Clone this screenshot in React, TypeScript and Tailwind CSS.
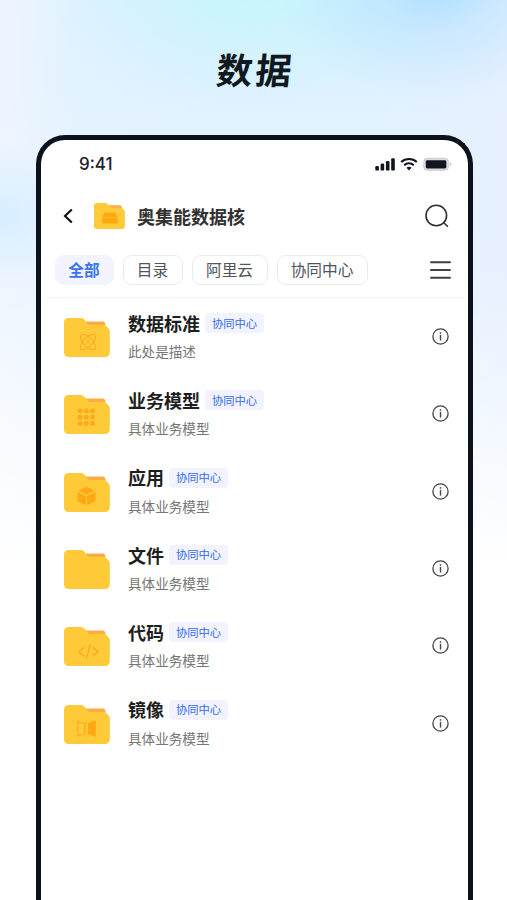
import type { ReactNode } from 'react'

type GlyphName = 'atom' | 'grid' | 'cube' | 'none' | 'code' | 'mirror' | 'drive'

const tabs = [
  { label: '全部', width: 'w-[59px]', active: true },
  { label: '目录', width: 'w-[60px]', active: false },
  { label: '阿里云', width: 'w-[76px]', active: false },
  { label: '协同中心', width: 'w-[91px]', active: false }
]

const folders: { id: number; title: string; desc: string; glyph: GlyphName }[] = [
  { id: 1, title: '数据标准', desc: '此处是描述', glyph: 'atom' },
  { id: 2, title: '业务模型', desc: '具体业务模型', glyph: 'grid' },
  { id: 3, title: '应用', desc: '具体业务模型', glyph: 'cube' },
  { id: 4, title: '文件', desc: '具体业务模型', glyph: 'none' },
  { id: 5, title: '代码', desc: '具体业务模型', glyph: 'code' },
  { id: 6, title: '镜像', desc: '具体业务模型', glyph: 'mirror' }
]

const glyphs: Record<GlyphName, ReactNode> = {
  none: null,
  atom: (
    <g fill="none" stroke="#f9a825" strokeWidth="1">
      <ellipse cx="24" cy="24" rx="9.8" ry="4.6" transform="rotate(45 24 24)" />
      <ellipse cx="24" cy="24" rx="9.8" ry="4.6" transform="rotate(-45 24 24)" />
      <circle cx="24" cy="24" r="1" />
    </g>
  ),
  grid: (
    <g fill="#fbab20">
      {[13.8, 20.1, 26.4].map((x) =>
        [13.6, 19.9, 26.2].map((y) => <rect key={`${x}-${y}`} x={x} y={y} width="4.4" height="4.5" rx="0.6" />)
      )}
      <path d="M13.8 15.3h17v1.2h-17zM13.8 21.5h17v1.2h-17zM13.8 27.8h17v1.2h-17z" opacity="0.5" />
    </g>
  ),
  cube: (
    <g fill="#ffa814">
      <path d="M22.5 13.7l8.3 3.9-8.3 3.9-8.3-3.9z" />
      <path d="M13.5 19l8.4 3.9v9.3l-7.2-3.5a2 2 0 0 1-1.2-1.8z" />
      <path d="M31.5 19l-8.4 3.9v9.3l7.2-3.5a2 2 0 0 0 1.2-1.8z" />
    </g>
  ),
  code: (
    <path
      d="M20 20.3l-5.2 4.5 5.2 4.4M28.8 20.3l5.2 4.5-5.2 4.4M26.3 17.5l-4 14.8"
      fill="none"
      stroke="#f9a623"
      strokeWidth="1.2"
    />
  ),
  mirror: (
    <g>
      <path d="M14 16.4l6.6 2.3v10L14 31z" fill="none" stroke="#fcae22" strokeWidth="1.2" />
      <path d="M31.7 15.3v16.5l-7.7-2.6V18z" fill="#ffa814" />
      <path d="M22.3 15v17.5" stroke="#fdba2f" strokeWidth="0.7" />
    </g>
  ),
  drive: (
    <g fill="#ffa70f">
      <path d="M17 14.4h13a3 3 0 0 1 2.6 1.8l2.2 5.3H12.6l1.8-5.3a3 3 0 0 1 2.6-1.8z" />
      <path d="M12.5 22h22.500l.6 7a1.600 1.600 0 0 1-1.600 1.800H13.600a1.600 1.600 0 0 1-1.600-1.600z" />
    </g>
  )
}

function FolderIcon({ glyph, className }: { glyph: GlyphName; className: string }) {
  return (
    <svg viewBox="0 0 46 39" preserveAspectRatio="none" className={className}>
      <path d="M20 3.5h18.5a2.8 2.8 0 0 1 2.8 2.8V12H20z" fill="#fcab45" />
      <path
        d="M4.500 0h12.200a5 5 0 0 1 3.200 1.200l4 4.600c.8.900 1.500 1.300 2.700 1.300h12.800c1.200 0 2.200.4 3.100 1.200l1.900 1.900c.9.900 1.400 1.800 1.400 3.100V34.500a4.500 4.500 0 0 1-4.500 4.500H4.500A4.500 4.500 0 0 1 0 34.500v-30A4.500 4.500 0 0 1 4.500 0z"
        fill="#ffca38"
      />
      {glyphs[glyph]}
    </svg>
  )
}

function StatusBar() {
  return (
    <div className="flex h-[49px] items-center justify-between pl-[38px] pr-[16px]">
      <span className="font-['Inter'] text-[17px] font-medium leading-none text-[#1b2029]">9:41</span>
      <svg width="77" height="15" viewBox="0 0 77 15">
        <g fill="#10151f">
          <rect x="0.3" y="9" width="3.6" height="4.6" rx="1.2" />
          <rect x="5.6" y="6.6" width="3.6" height="7" rx="1.2" />
          <rect x="10.9" y="4" width="3.6" height="9.6" rx="1.2" />
          <rect x="16.2" y="1.2" width="3.6" height="12.4" rx="1.2" />
          <path d="M34 9.8a3.8 3.8 0 0 1 2.5 1L34 13.5 31.5 10.8a3.8 3.8 0 0 1 2.5-1z" />
        </g>
        <g fill="none" stroke="#10151f" strokeWidth="2">
          <path d="M26.2 5a11.5 11.5 0 0 1 15.6 0" />
          <path d="M29.2 8.2a7.1 7.1 0 0 1 9.6 0" />
        </g>
        <rect x="48.8" y="1.3" width="24.5" height="12" rx="3.2" fill="#dcddde" stroke="#cbcdce" strokeWidth="1" />
        <rect x="50.8" y="3.2" width="20.5" height="8.2" rx="1.4" fill="#10151f" />
        <path d="M74.6 5.2c1.3.3 2 1 2 2.1s-.7 1.8-2 2.1z" fill="#cbcdce" />
      </svg>
    </div>
  )
}

function Header() {
  return (
    <div className="flex h-[54px] items-center pl-[22px] pr-[19px]">
      <svg width="10" height="16" viewBox="0 0 10 16" fill="none" stroke="#151515" strokeWidth="2.2">
        <path d="M8.8 1.500L2 8l6.800 6.500" />
      </svg>
      <FolderIcon glyph="drive" className="ml-[21px] h-[26px] w-[31px]" />
      <span className="mb-px ml-[12px] text-[18px] font-bold leading-none text-[#303030]">奥集能数据核</span>
      <svg className="ml-auto" width="24" height="24" viewBox="0 0 24 24" fill="none" stroke="#303030" strokeWidth="1.6">
        <circle cx="11.3" cy="11.5" r="10.3" />
        <path d="M18.3 18.300l4.600 4.500" />
      </svg>
    </div>
  )
}

function TabBar() {
  return (
    <div className="mx-[4px] flex h-[55px] items-center gap-[9px] border-b border-[#f3f3f4] pl-[9.5px] pr-[13px]">
      {tabs.map((tab) => (
        <button
          key={tab.label}
          className={`flex h-[30px] shrink-0 items-center justify-center rounded-[9px] border text-[15.7px] leading-none ${tab.width} ${
            tab.active
              ? 'border-[#f2f3ff] bg-[#f2f3ff] font-bold text-[#3a74ec]'
              : 'border-[#e9ebed] bg-white text-[#50545b]'
          }`}
        >
          {tab.label}
        </button>
      ))}
      <svg className="ml-auto" width="21" height="18" viewBox="0 0 21 18" stroke="#414141" strokeWidth="1.9" strokeLinecap="round">
        <path d="M1 1.3h19M1 9h19M1 16.7h19" />
      </svg>
    </div>
  )
}

function InfoIcon() {
  return (
    <svg width="17" height="17" viewBox="0 0 17 17" fill="none" stroke="#454545" strokeWidth="1.3">
      <circle cx="8.5" cy="8.5" r="7.6" />
      <path d="M8.5 6.8v5.8" strokeWidth="1.4" />
      <path d="M8.5 4.2v1.5" strokeWidth="1.5" />
    </svg>
  )
}

export default function App() {
  return (
    <div className="flex h-[900px] w-[507px] flex-col items-center overflow-hidden bg-white bg-[linear-gradient(180deg,#ffffff00_0px,#ffffff00_260px,#ffffff_570px),radial-gradient(ellipse_160px_120px_at_435px_-20px,#a9ddff_0%,#b9e2ff99_40%,#c9e7ff00_100%),radial-gradient(ellipse_210px_120px_at_255px_-15px,#c5f7fc_0%,#c8f4fd99_45%,#d0efff00_100%),radial-gradient(ellipse_80px_70px_at_0px_215px,#d6eeff_0%,#dcf0ff00_100%),linear-gradient(90deg,#eef5ff_0%,#e6f3ff80_14%,#def0ff00_40%,#def0ff00_75%,#e6f0ff_100%),linear-gradient(180deg,#daf1ff_0px,#def1ff_80px,#e4f2ff_140px,#eaf4ff_400px)] font-['Noto_Sans_CJK_SC',sans-serif]">
      <h1 className="flex h-[135px] shrink-0 -skew-x-6 items-center pl-[6px] text-[36px] font-bold leading-none tracking-[3px] text-[#101820]">
        数据
      </h1>
      <div className="mr-[-2px] h-[800px] w-[437px] shrink-0 overflow-hidden rounded-t-[29px] border-[5px] border-b-0 border-[#0c121c] bg-white">
        <StatusBar />
        <Header />
        <TabBar />
        <ul>
          {folders.map((folder) => (
            <li key={folder.id} className="flex h-[77.33px] items-center pl-[23px] pr-[19px]">
              <FolderIcon glyph={folder.glyph} className="mt-[2px] h-[39px] w-[46px]" />
              <div className="ml-[18px]">
                <div className="flex h-[22px] items-center">
                  <span className="mb-px text-[18px] font-bold leading-none text-[#1e1e1e]">{folder.title}</span>
                  <span className="ml-[5px] flex h-[20px] w-[59px] items-center justify-center rounded-[4px] bg-[#f2f3ff] text-[11.3px] leading-none text-[#2e6bea]">
                    协同中心
                  </span>
                </div>
                <p className="mt-[8px] mb-px text-[13.6px] leading-[18px] text-[#757575]">{folder.desc}</p>
              </div>
              <span className="ml-auto">
                <InfoIcon />
              </span>
            </li>
          ))}
        </ul>
      </div>
    </div>
  )
}
